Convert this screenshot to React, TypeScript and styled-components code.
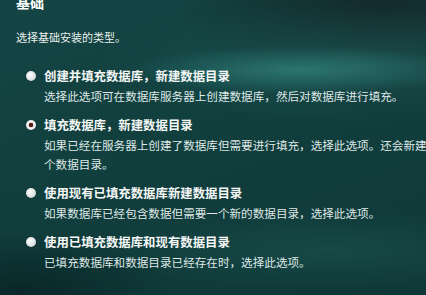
import styled, { createGlobalStyle } from "styled-components";

const GlobalStyle = createGlobalStyle`
  html, body {
    margin: 0;
    padding: 0;
    width: 426px;
    height: 295px;
    overflow: hidden;
    background: #0f3838;
  }
`;

type Option = {
  title: string;
  desc: string;
  checked?: boolean;
};

const options: Option[] = [
  {
    title: "创建并填充数据库，新建数据目录",
    desc: "选择此选项可在数据库服务器上创建数据库，然后对数据库进行填充。",
  },
  {
    title: "填充数据库，新建数据目录",
    desc: "如果已经在服务器上创建了数据库但需要进行填充，选择此选项。还会新建一个数据目录。",
    checked: true,
  },
  {
    title: "使用现有已填充数据库新建数据目录",
    desc: "如果数据库已经包含数据但需要一个新的数据目录，选择此选项。",
  },
  {
    title: "使用已填充数据库和现有数据目录",
    desc: "已填充数据库和数据目录已经存在时，选择此选项。",
  },
];

const App = () => {
  return (
    <>
      <GlobalStyle />
      <Page>
        <Heading>基础</Heading>
        <Subtitle>选择基础安装的类型。</Subtitle>
        <OptionList>
          {options.map((o) => (
            <OptionRow key={o.title}>
              <Radio $checked={!!o.checked} />
              <OptionText>
                <OptionTitle>{o.title}</OptionTitle>
                <OptionDesc>{o.desc}</OptionDesc>
              </OptionText>
            </OptionRow>
          ))}
        </OptionList>
      </Page>
    </>
  );
};
export default App;

const Page = styled.div`
  width: 426px;
  height: 295px;
  box-sizing: border-box;
  padding-left: 16px;
  overflow: hidden;
  font-family: "Noto Sans CJK SC", "Noto Sans", sans-serif;
  color: #e4ecea;
  background:
    radial-gradient(ellipse 170px 24px at 300px 70px, rgba(52, 135, 128, 0.7), transparent),
    radial-gradient(ellipse 260px 60px at 360px 62px, rgba(30, 95, 92, 0.55), transparent),
    radial-gradient(ellipse 200px 110px at 380px 8px, rgba(20, 40, 42, 0.95), transparent),
    radial-gradient(ellipse 160px 60px at 20px 290px, rgba(8, 34, 36, 0.8), transparent),
    radial-gradient(ellipse 240px 40px at 330px 250px, rgba(30, 90, 88, 0.45), transparent),
    linear-gradient(160deg, #144544 0%, #113f3e 45%, #0f3837 100%);
`;

const Heading = styled.div`
  margin-top: -7px;
  font-size: 14px;
  line-height: 18px;
  font-weight: 700;
  color: #ffffff;
`;

const Subtitle = styled.div`
  margin-top: 17px;
  font-size: 11px;
  line-height: 18px;
  color: #e8efee;
`;

const OptionList = styled.div`
  display: flex;
  flex-direction: column;
  gap: 10px;
  margin-top: 21px;
  padding-left: 10px;
`;

const OptionRow = styled.div`
  display: flex;
  align-items: flex-start;
  gap: 8px;
`;

const Radio = styled.span<{ $checked: boolean }>`
  flex: none;
  width: 10px;
  height: 10px;
  margin-top: 4px;
  border-radius: 50%;
  box-sizing: border-box;
  background: ${(p) =>
    p.$checked
      ? "radial-gradient(circle, #5a1a12 0 2px, #f0f0f0 2.6px)"
      : "radial-gradient(circle at 40% 40%, #ffffff, #c3caca)"};
  box-shadow: 0 0 1px rgba(0, 0, 0, 0.6);
`;

const OptionText = styled.div`
  width: 400px;
  flex: none;
`;

const OptionTitle = styled.div`
  font-size: 12.4px;
  line-height: 18px;
  font-weight: 700;
  color: #f4f7f6;
`;

const OptionDesc = styled.div`
  margin-top: 2px;
  font-size: 11.6px;
  line-height: 19px;
  color: #dfe8e6;
`;
